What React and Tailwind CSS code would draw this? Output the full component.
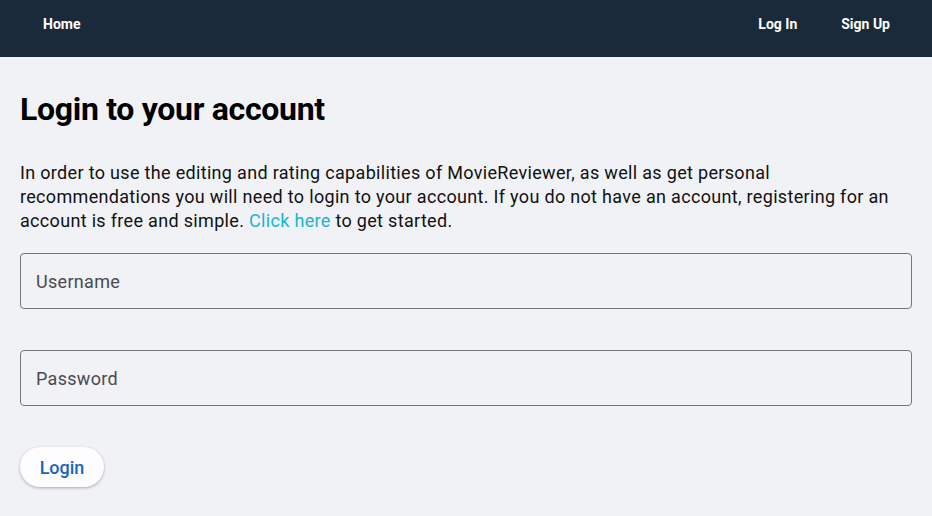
export default function App() {
  return (
    <div className="min-h-[516px] bg-[#f0f2f6]" style={{ fontFamily: "Roboto, 'Liberation Sans', sans-serif" }}>
      <header className="h-[57px] bg-[#1b2a3b] flex items-start justify-between px-[43px] pt-[14px] text-white text-[14px] leading-[20px] font-bold">
        <a className="text-white">Home</a>
        <nav className="flex items-center gap-[44px] mr-[-1px]">
          <a>Log In</a>
          <a>Sign Up</a>
        </nav>
      </header>
      <main className="px-5 pt-[88px]">
        <h1 className="text-[32px] font-bold leading-[40px] text-black tracking-[-0.3px] mt-[-56px]">Login to your account</h1>
        <p className="mt-[32px] text-[18px] leading-[24px] tracking-[0.32px] text-[#111]">
          In order to use the editing and rating capabilities of MovieReviewer, as well as get personal recommendations you will need to login to your account. If you do not have an account, registering for an account is free and simple.{" "}
          <a className="text-[#1ab5d0]">Click here</a> to get started.
        </p>
        <div className="mt-[20px] flex flex-col gap-[41px]">
          <input
            placeholder="Username"
            className="h-[56px] w-full rounded-[4px] border border-[#75757b] bg-transparent px-[15px] text-[18px] tracking-[0.3px] placeholder:text-[#4a4a52] outline-none"
          />
          <input
            placeholder="Password"
            type="password"
            className="h-[56px] w-full rounded-[4px] border border-[#75757b] bg-transparent px-[15px] text-[18px] tracking-[0.3px] placeholder:text-[#4a4a52] outline-none"
          />
        </div>
        <button className="mt-[41px] h-[40px] w-[84px] rounded-full bg-[#fdfcff] text-[18px] font-medium text-[#1565c0] shadow-[0_1px_3px_rgba(0,0,0,0.3)]">
          Login
        </button>
      </main>
    </div>
  );
}
